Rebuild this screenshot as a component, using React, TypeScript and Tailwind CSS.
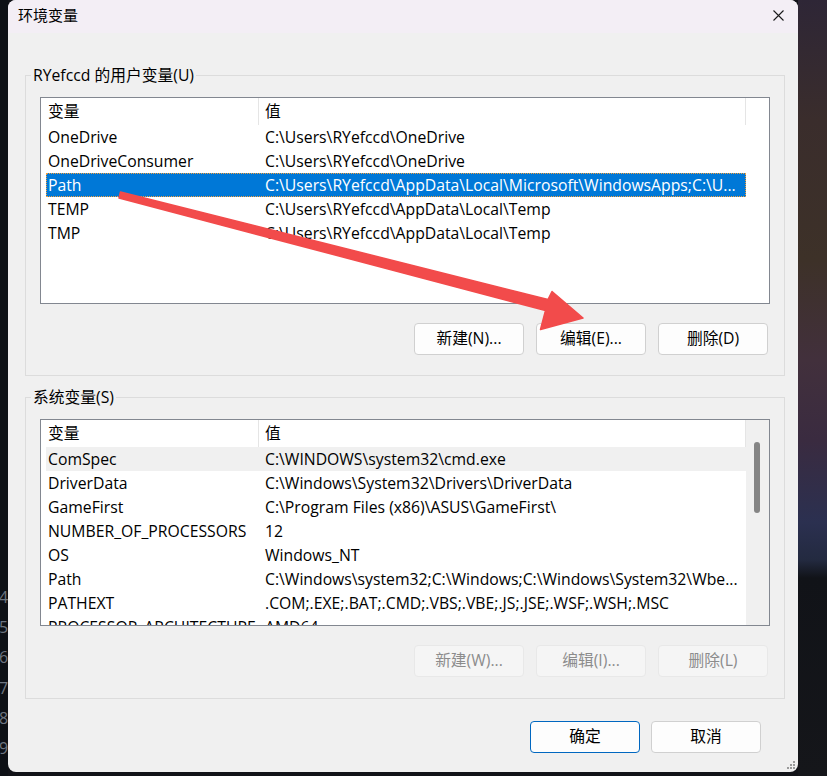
import React from "react";

type Row = { name: string; value: string; state?: "selected" | "hover" };

const userVars: Row[] = [
  { name: "OneDrive", value: "C:\\Users\\RYefccd\\OneDrive" },
  { name: "OneDriveConsumer", value: "C:\\Users\\RYefccd\\OneDrive" },
  {
    name: "Path",
    value: "C:\\Users\\RYefccd\\AppData\\Local\\Microsoft\\WindowsApps;C:\\U...",
    state: "selected",
  },
  { name: "TEMP", value: "C:\\Users\\RYefccd\\AppData\\Local\\Temp" },
  { name: "TMP", value: "C:\\Users\\RYefccd\\AppData\\Local\\Temp" },
];

const sysVars: Row[] = [
  { name: "ComSpec", value: "C:\\WINDOWS\\system32\\cmd.exe", state: "hover" },
  { name: "DriverData", value: "C:\\Windows\\System32\\Drivers\\DriverData" },
  { name: "GameFirst", value: "C:\\Program Files (x86)\\ASUS\\GameFirst\\" },
  { name: "NUMBER_OF_PROCESSORS", value: "12" },
  { name: "OS", value: "Windows_NT" },
  { name: "Path", value: "C:\\Windows\\system32;C:\\Windows;C:\\Windows\\System32\\Wbe..." },
  { name: "PATHEXT", value: ".COM;.EXE;.BAT;.CMD;.VBS;.VBE;.JS;.JSE;.WSF;.WSH;.MSC" },
  { name: "PROCESSOR_ARCHITECTURE", value: "AMD64" },
];

const VarRow = ({ row }: { row: Row }) => {
  let tone = "text-black";
  if (row.state === "selected")
    tone = "bg-[#0078d7] text-white outline outline-1 outline-dotted outline-[#f5a03c] -outline-offset-1";
  if (row.state === "hover") tone = "bg-[#f0f0f0] text-black";

  return (
    <div className={`ml-[5px] w-[700px] h-[24px] flex leading-[24px] whitespace-nowrap ${tone}`}>
      <span className="w-[212px] shrink-0 pl-[2px] overflow-hidden">{row.name}</span>
      <span className="flex-1 pl-[7px] overflow-hidden">{row.value}</span>
    </div>
  );
};

const VarList = ({ rows, scroll }: { rows: Row[]; scroll?: boolean }) => (
  <div className="h-[207px] border border-[#828790] bg-white flex overflow-hidden">
    <div className="w-[705px] shrink-0">
      <div className="h-[27px] flex leading-[27px]">
        <span className="w-[218px] pl-[7px] border-r border-[#e5e5e5]">变量</span>
        <span className="flex-1 pl-[6px] border-r border-[#e5e5e5]">值</span>
      </div>
      {rows.map((r) => (
        <VarRow key={r.name + r.value} row={r} />
      ))}
    </div>
    <div className={`flex-1 ${scroll ? "bg-[#f0f0f0]" : "bg-white"}`}>
      {scroll && <div className="mt-[22px] ml-[8px] w-[6px] h-[71px] rounded-full bg-[#858585]" />}
    </div>
  </div>
);

const WinButton = ({
  label,
  disabled,
  primary,
}: {
  label: string;
  disabled?: boolean;
  primary?: boolean;
}) => {
  let look = "bg-[#fdfdfd] border-[#d0d0d0] text-black";
  if (disabled) look = "bg-[#f5f5f5] border-[#e8e8e8] text-[#8c8c8c]";
  if (primary) look = "bg-[#fdfdfd] border-[#0067c0] text-black";
  return (
    <div
      className={`w-[110px] h-[32px] rounded-[4px] border flex items-center justify-center leading-none ${look}`}
    >
      {label}
    </div>
  );
};

const GroupBox = ({
  title,
  rows,
  scroll,
  buttons,
  disabled,
  className,
}: {
  title: string;
  rows: Row[];
  scroll?: boolean;
  buttons: string[];
  disabled?: boolean;
  className: string;
}) => (
  <fieldset className={`ml-[17px] w-[760px] border border-[#dcdcdc] ${className}`}>
    <legend className="ml-[5px] px-[2px] leading-[20px]">{title}</legend>
    <div className="px-[14px] pt-[12px]">
      <VarList rows={rows} scroll={scroll} />
      <div className="mt-[19px] mr-[2px] flex justify-end gap-[12px]">
        {buttons.map((b) => (
          <WinButton key={b} label={b} disabled={disabled} />
        ))}
      </div>
    </div>
  </fieldset>
);

export default function App() {
  return (
    <div className="relative w-[827px] h-[776px] overflow-hidden flex bg-[#121318] font-['Open_Sans','Noto_Sans_CJK_SC',sans-serif] text-[15.75px] text-black">
      {/* editor line numbers peeking out on the left */}
      <div className="w-[8px] h-full shrink-0 overflow-hidden bg-[#0e1116] pt-[582px] text-[16px] leading-[30.2px] text-[#6e7681]">
        {["4", "5", "6", "7", "8", "9"].map((n) => (
          <div key={n} className="-ml-[1px]">{n}</div>
        ))}
      </div>

      <div className="relative w-[790px] h-[772px] shrink-0 rounded-[8px] bg-[#f0f0f0] overflow-hidden flex flex-col">
        <div className="h-[33px] bg-[#f3eef5] flex items-center justify-between pl-[10px] pr-[14px] pb-[2px] text-[15px]">
          <span>环境变量</span>
          <svg width="11" height="11" viewBox="0 0 11 11">
            <path d="M0.5 0.5 L10.5 10.5 M10.5 0.5 L0.5 10.5" stroke="#1a1a1a" strokeWidth="1.1" />
          </svg>
        </div>

        <GroupBox
          className="mt-[32px] pb-[20px]"
          title="RYefccd 的用户变量(U)"
          rows={userVars}
          buttons={["新建(N)...", "编辑(E)...", "删除(D)"]}
        />
        <GroupBox
          className="mt-[11px] pb-[21px]"
          title="系统变量(S)"
          rows={sysVars}
          scroll
          disabled
          buttons={["新建(W)...", "编辑(I)...", "删除(L)"]}
        />

        <div className="mt-[22px] pr-[37px] flex justify-end gap-[11px]">
          <WinButton label="确定" primary />
          <WinButton label="取消" />
        </div>

        <svg className="absolute right-[2px] bottom-[2px]" width="10" height="10" viewBox="0 0 10 10">
          <g fill="#9a9a9a">
            <rect x="7" y="1" width="2" height="2" />
            <rect x="4" y="4" width="2" height="2" />
            <rect x="7" y="4" width="2" height="2" />
            <rect x="1" y="7" width="2" height="2" />
            <rect x="4" y="7" width="2" height="2" />
            <rect x="7" y="7" width="2" height="2" />
          </g>
        </svg>
      </div>

      <div className="flex-1 h-full bg-[linear-gradient(to_bottom,#2e2636_0px,#3a2d2c_120px,#3d3128_260px,#42303c_360px,#3a2b40_440px,#2b3050_522px,#232a40_560px,#111318_578px,#15161a_776px)]" />

      {/* red annotation arrow */}
      <svg className="absolute left-0 top-0 pointer-events-none" width="827" height="776" viewBox="0 0 827 776">
        <polygon
          points="120.5,192 548,299.5 552,291.5 583,318 540.5,329.5 545.5,310.5 119,198"
          fill="#f24b4b"
          stroke="#f24b4b"
          strokeWidth="1.5"
          strokeLinejoin="round"
        />
      </svg>
    </div>
  );
}
